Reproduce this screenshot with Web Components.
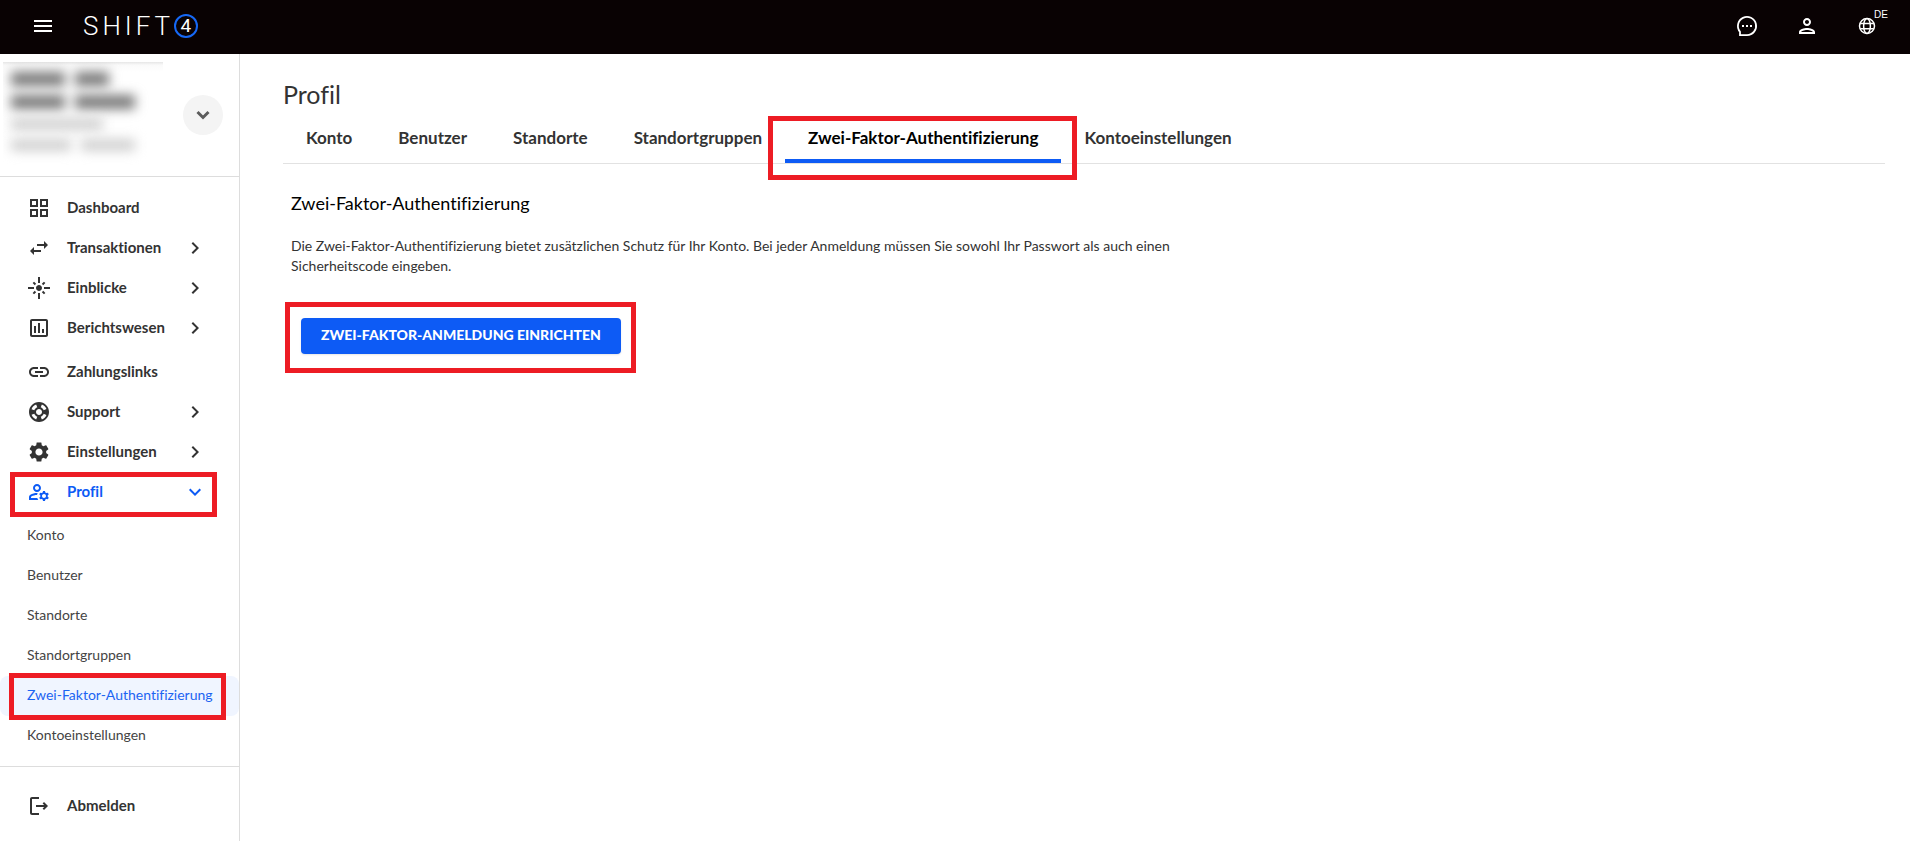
<!DOCTYPE html>
<html lang="de">
<head>
<meta charset="utf-8">
<meta name="viewport" content="width=device-width, initial-scale=1">
<title>Profil</title>
<style>
  body {
    margin: 0;
    background: #fff;
    color: #333;
    font-family: Lato, "Open Sans", sans-serif;
    font-size: 14px;
    font-variant-ligatures: none;
  }
</style>
</head>
<body>

<portal-app></portal-app>

<script>
/*
  ui-icon
  Atributos
  - name: nombre del icono en ICONS
  - size: lado en px (24 por defecto)
*/
const ICONS = {
  menu: '<path d="M3 18h18v-2H3v2zm0-5h18v-2H3v2zm0-7v2h18V6H3z"/>',
  chat: '<path d="M12 21.100H5v-3.300A9.100 9.100 0 1 1 12 21.100z" fill="none" stroke="currentColor" stroke-width="1.800"/><path d="M7 11h2v2H7zm4 0h2v2h-2zm4 0h2v2h-2z"/>',
  person: '<path d="M12 6c1.100 0 2 .9 2 2s-.9 2-2 2-2-.9-2-2 .9-2 2-2m0 10c2.700 0 5.800 1.290 6 2H6c.23-.72 3.310-2 6-2m0-12C9.790 4 8 5.790 8 8s1.790 4 4 4 4-1.790 4-4-1.790-4-4-4zm0 10c-2.670 0-8 1.340-8 4v2h16v-2c0-2.660-5.330-4-8-4z"/>',
  globe: '<g fill="none" stroke="currentColor" stroke-width="2"><circle cx="12" cy="12" r="10"/><ellipse cx="12" cy="12" rx="4.500" ry="10"/><path d="M3 8.500h18M3 15.500h18"/></g>',
  dashboard: '<path d="M3 3v8h8V3H3zm6 6H5V5h4v4zm-6 4v8h8v-8H3zm6 6H5v-4h4v4zm4-16v8h8V3h-8zm6 6h-4V5h4v4zm-6 4v8h8v-8h-8zm6 6h-4v-4h4v4z"/>',
  transfer: '<path d="M6.990 11L3 15l3.990 4v-3H14v-2H6.990v-3zM21 9l-3.990-4v3H10v2h7.010v3L21 9z"/>',
  flare: '<path d="M7 11H1v2h6v-2zm2.170-3.240L7.050 5.640 5.640 7.050l2.120 2.120 1.410-1.410zM13 1h-2v6h2V1zm5.360 6.050l-1.410-1.410-2.120 2.120 1.410 1.410 2.120-2.120zM17 11v2h6v-2h-6zm-5-2c-1.660 0-3 1.340-3 3s1.340 3 3 3 3-1.340 3-3-1.340-3-3-3zm2.830 7.240l2.120 2.120 1.410-1.410-2.120-2.120-1.410 1.410zm-9.190.71l1.410 1.410 2.120-2.120-1.410-1.410-2.120 2.120zM11 23h2v-6h-2v6z"/>',
  chart: '<path d="M19 3H5c-1.100 0-2 .9-2 2v14c0 1.100.9 2 2 2h14c1.100 0 2-.9 2-2V5c0-1.100-.9-2-2-2zm0 16H5V5h14v14zM7 10h2v7H7zm4-3h2v10h-2zm4 6h2v4h-2z"/>',
  link: '<path d="M3.900 12c0-1.710 1.390-3.100 3.100-3.100h4V7H7c-2.760 0-5 2.240-5 5s2.240 5 5 5h4v-1.900H7c-1.710 0-3.100-1.390-3.100-3.100zM8 13h8v-2H8v2zm9-6h-4v1.900h4c1.710 0 3.100 1.390 3.100 3.100s-1.390 3.100-3.100 3.100h-4V17h4c2.760 0 5-2.240 5-5s-2.240-5-5-5z"/>',
  support: '<path d="M12 2C6.480 2 2 6.480 2 12s4.480 10 10 10 10-4.480 10-10S17.520 2 12 2zm7.460 7.120l-2.780 1.150c-.51-1.360-1.580-2.440-2.950-2.940l1.150-2.780c2.100.8 3.770 2.470 4.580 4.570zM12 15c-1.660 0-3-1.340-3-3s1.340-3 3-3 3 1.340 3 3-1.340 3-3 3zM9.130 4.540l1.170 2.780c-1.380.5-2.470 1.590-2.980 2.970L4.540 9.130c.81-2.110 2.480-3.780 4.590-4.590zM4.540 14.870l2.780-1.150c.51 1.380 1.590 2.460 2.970 2.960l-1.170 2.780c-2.100-.81-3.770-2.480-4.580-4.590zm10.340 4.590l-1.150-2.780c1.370-.51 2.450-1.590 2.950-2.970l2.780 1.170c-.81 2.100-2.480 3.770-4.580 4.580z"/>',
  settings: '<path d="M19.140 12.940c.04-.3.060-.61.060-.94 0-.32-.02-.64-.07-.94l2.030-1.580c.18-.14.230-.41.120-.61l-1.920-3.320c-.12-.22-.37-.29-.59-.22l-2.390.96c-.5-.38-1.030-.7-1.620-.94l-.36-2.540c-.04-.24-.24-.41-.48-.41h-3.840c-.24 0-.43.17-.47.410l-.36 2.540c-.59.240-1.130.57-1.620.94l-2.390-.96c-.22-.08-.47 0-.59.220L2.740 8.870c-.12.210-.08.470.12.610l2.030 1.580c-.05.3-.09.630-.09.940s.02.640.07.940l-2.030 1.580c-.18.140-.23.410-.12.610l1.920 3.320c.12.220.37.290.59.220l2.390-.96c.5.380 1.030.7 1.620.94l.36 2.540c.05.240.24.410.48.410h3.840c.24 0 .44-.17.470-.41l.36-2.540c.59-.24 1.130-.56 1.620-.94l2.390.96c.22.080.47 0 .59-.22l1.920-3.320c.12-.22.070-.47-.12-.61l-2.010-1.580zM12 15.600c-1.980 0-3.600-1.620-3.600-3.600s1.620-3.600 3.600-3.600 3.600 1.620 3.600 3.600-1.620 3.600-3.600 3.600z"/>',
  profile: '<path d="M4 18v-.65c0-.34.160-.66.410-.81C6.100 15.530 8.030 15 10 15c.03 0 .05 0 .08.010.1-.7.300-1.370.590-1.980-.22-.02-.44-.03-.67-.03-2.420 0-4.680.67-6.610 1.820-.88.520-1.390 1.500-1.390 2.530V20h9.260c-.42-.6-.75-1.280-.97-2H4zM10 12c2.210 0 4-1.790 4-4s-1.790-4-4-4-4 1.790-4 4 1.790 4 4 4zm0-6c1.100 0 2 .9 2 2s-.9 2-2 2-2-.9-2-2 .9-2 2-2zM20.750 16c0-.22-.03-.42-.06-.63l1.140-1.010-1-1.730-1.450.49c-.32-.27-.68-.48-1.080-.63L18 11h-2l-.3 1.490c-.4.150-.76.360-1.080.63l-1.450-.49-1 1.730 1.140 1.010c-.03.210-.06.410-.06.630s.03.420.06.630l-1.140 1.010 1 1.730 1.450-.49c.32.270.68.480 1.080.63L16 21h2l.3-1.490c.4-.15.760-.36 1.080-.63l1.450.49 1-1.730-1.140-1.010c.03-.21.060-.41.060-.63zM17 18c-1.100 0-2-.9-2-2s.9-2 2-2 2 .9 2 2-.9 2-2 2z"/>',
  logout: '<path d="M12 3H5c-1.100 0-2 .9-2 2v14c0 1.100.9 2 2 2h7v-2H5V5h7zM17 8l-1.400 1.400L17.200 11H9v2h8.200l-1.600 1.600L17 16l4-4z"/>',
  right: '<path d="M10 6L8.590 7.410 13.170 12l-4.580 4.590L10 18l6-6z"/>',
  down: '<path d="M16.590 8.590L12 13.170 7.410 8.590 6 10l6 6 6-6z"/>',
  expand: '<path d="M6.500 9l5.500 5.500L17.500 9" fill="none" stroke="currentColor" stroke-width="3"/>'
};

class UiIcon extends HTMLElement {
  constructor() {
    super();
    this.attachShadow({ mode: "open" });
  }

  connectedCallback() {
    const size = this.getAttribute("size") || 24;
    this.shadowRoot.innerHTML = `
      <style>
        :host { display: inline-flex; flex: none; }
        svg { display: block; fill: currentColor; }
      </style>
      <svg width="${size}" height="${size}" viewBox="0 0 24 24" aria-hidden="true">${ICONS[this.getAttribute("name")]}</svg>
    `;
  }
}
customElements.define("ui-icon", UiIcon);


/*
  mark-box: marco rojo alrededor de lo que recibe en el slot

  Custom properties
  - --mark-inset: distancia del marco a cada lado del contenido
*/
class MarkBox extends HTMLElement {
  constructor() {
    super();
    this.attachShadow({ mode: "open" }).innerHTML = `
      <style>
        :host { display: block; position: relative; }
        .frame {
          position: absolute;
          inset: var(--mark-inset, 0);
          border: 5px solid #ed1c24;
          pointer-events: none;
          z-index: 1;
        }
      </style>
      <slot></slot>
      <div class="frame"></div>
    `;
  }
}
customElements.define("mark-box", MarkBox);


const topBarTemplate = document.createElement("template");
topBarTemplate.innerHTML = `
<style>
  :host {
    display: flex;
    align-items: center;
    justify-content: space-between;
    height: 54px;
    padding: 0 31px 2px;
    background: #090203;
    color: #fff;
    box-sizing: border-box;
  }
  .left, .right { display: flex; align-items: center; }
  .left { gap: 28px; }
  .right { gap: 36px; }
  button {
    display: flex;
    position: relative;
    padding: 0;
    border: 0;
    background: none;
    color: inherit;
    cursor: pointer;
  }
  .globe { width: 24px; height: 24px; align-items: center; justify-content: center; }
  .lang {
    position: absolute;
    left: 19px;
    top: -5px;
    font: 10px/12px "Liberation Sans", sans-serif;
  }
  .logo {
    display: flex;
    align-items: center;
    color: inherit;
    text-decoration: none;
    font: 300 26px/26px Roboto, sans-serif;
  }
  .word { display: flex; gap: 4px; }
  .four {
    width: 20px;
    height: 20px;
    margin-left: 4px;
    border: 2px solid #1668f5;
    border-radius: 50%;
    font-size: 19px;
    font-weight: 400;
    line-height: 20px;
    text-align: center;
  }
</style>
<div class="left">
  <button type="button" aria-label="Menü"><ui-icon name="menu"></ui-icon></button>
  <a class="logo" href="#">
    <span class="word"><span>S</span><span>H</span><span>I</span><span>F</span><span>T</span></span>
    <span class="four">4</span>
  </a>
</div>
<div class="right">
  <button type="button" aria-label="Chat"><ui-icon name="chat"></ui-icon></button>
  <button type="button" aria-label="Benutzerkonto"><ui-icon name="person"></ui-icon></button>
  <button type="button" class="globe" aria-label="Sprache"><ui-icon name="globe" size="18"></ui-icon><span class="lang">DE</span></button>
</div>
`;

class TopBar extends HTMLElement {
  constructor() {
    super();
    this.attachShadow({ mode: "open" }).appendChild(topBarTemplate.content.cloneNode(true));
  }
}
customElements.define("top-bar", TopBar);


/*
  nav-item
  Atributos
  - icon: icono de la izquierda
  - arrow: right | down
  - active
*/
class NavItem extends HTMLElement {
  constructor() {
    super();
    this.attachShadow({ mode: "open" });
  }

  connectedCallback() {
    const arrow = this.getAttribute("arrow");
    this.shadowRoot.innerHTML = `
      <style>
        :host { display: block; color: #333; }
        :host([active]) { color: #0d5bf5; }
        a {
          display: flex;
          align-items: center;
          height: 40px;
          padding: 0 32px 0 27px;
          color: inherit;
          font-size: 15px;
          font-weight: 700;
          text-decoration: none;
        }
        .label { flex: 1; margin: 0 16px; padding-bottom: 2px; }
      </style>
      <a href="#">
        <ui-icon name="${this.getAttribute("icon")}"></ui-icon>
        <span class="label"><slot></slot></span>
        ${arrow ? `<ui-icon name="${arrow}"></ui-icon>` : ""}
      </a>
    `;
  }
}
customElements.define("nav-item", NavItem);


class SubItem extends HTMLElement {
  constructor() {
    super();
    this.attachShadow({ mode: "open" }).innerHTML = `
      <style>
        :host { display: block; color: #444; }
        :host([active]) { color: #1c64f2; }
        :host([active]) a { background: #f0f5ff; }
        a {
          display: block;
          padding: 0 8px 2px 27px;
          border-radius: 8px;
          color: inherit;
          line-height: 38px;
          white-space: nowrap;
          text-decoration: none;
        }
      </style>
      <a href="#"><slot></slot></a>
    `;
  }
}
customElements.define("sub-item", SubItem);


// datos del comercio, ocultos con desenfoque
class AccountCard extends HTMLElement {
  constructor() {
    super();
    this.attachShadow({ mode: "open" }).innerHTML = `
      <style>
        :host {
          display: flex;
          align-items: center;
          justify-content: space-between;
          height: 122px;
          padding: 0 16px 0 3px;
          border-bottom: 1px solid #ddd;
        }
        .hidden {
          width: 160px;
          height: 106px;
          overflow: hidden;
          box-sizing: border-box;
          padding: 10px 8px;
          background: linear-gradient(#e6e6e6, #fafafa 3px, #fff 10px);
        }
        .line { display: flex; gap: 10px; height: 14px; margin-bottom: 9px; filter: blur(6px); }
        .line i { background: #777; }
        .line.light { height: 12px; }
        .line.light i { background: #d0d0d0; }
        button {
          display: flex;
          align-items: center;
          justify-content: center;
          width: 40px;
          height: 40px;
          padding: 0;
          border: 0;
          border-radius: 50%;
          background: #f4f4f4;
          color: #5c5c5c;
        }
      </style>
      <div class="hidden">
        <div class="line"><i style="width: 54px"></i><i style="width: 34px"></i></div>
        <div class="line"><i style="width: 54px"></i><i style="width: 60px"></i></div>
        <div class="line light"><i style="width: 92px"></i></div>
        <div class="line light"><i style="width: 60px"></i><i style="width: 54px"></i></div>
      </div>
      <button type="button" aria-label="Konto wechseln"><ui-icon name="expand"></ui-icon></button>
    `;
  }
}
customElements.define("account-card", AccountCard);


const sideBarTemplate = document.createElement("template");
sideBarTemplate.innerHTML = `
<style>
  :host {
    display: block;
    border-right: 1px solid #ddd;
  }
  .group { margin-bottom: 4px; }
  nav { padding: 11px 0 10px; border-bottom: 1px solid #ddd; }
  .bottom { padding: 19px 0 15px; }
  .mark-profile { --mark-inset: 0 22px -5px 10px; }
  .mark-sub { --mark-inset: -3px 13px -4px 9px; }
</style>
<account-card></account-card>
<nav>
  <div class="group">
    <nav-item icon="dashboard">Dashboard</nav-item>
    <nav-item icon="transfer" arrow="right">Transaktionen</nav-item>
    <nav-item icon="flare" arrow="right">Einblicke</nav-item>
    <nav-item icon="chart" arrow="right">Berichtswesen</nav-item>
  </div>
  <div class="group">
    <nav-item icon="link">Zahlungslinks</nav-item>
    <nav-item icon="support" arrow="right">Support</nav-item>
    <nav-item icon="settings" arrow="right">Einstellungen</nav-item>
    <mark-box class="mark-profile"><nav-item icon="profile" arrow="down" active>Profil</nav-item></mark-box>
  </div>
  <sub-item>Konto</sub-item>
  <sub-item>Benutzer</sub-item>
  <sub-item>Standorte</sub-item>
  <sub-item>Standortgruppen</sub-item>
  <mark-box class="mark-sub"><sub-item active>Zwei-Faktor-Authentifizierung</sub-item></mark-box>
  <sub-item>Kontoeinstellungen</sub-item>
</nav>
<div class="bottom">
  <nav-item icon="logout">Abmelden</nav-item>
</div>
`;

class SideBar extends HTMLElement {
  constructor() {
    super();
    this.attachShadow({ mode: "open" }).appendChild(sideBarTemplate.content.cloneNode(true));
  }
}
customElements.define("side-bar", SideBar);


class TabItem extends HTMLElement {
  constructor() {
    super();
    this.attachShadow({ mode: "open" }).innerHTML = `
      <style>
        :host { display: block; }
        a {
          display: block;
          height: 47px;
          padding: 0 23px;
          box-sizing: border-box;
          color: #333;
          font-size: 17px;
          font-weight: 700;
          line-height: 44px;
          white-space: nowrap;
          text-decoration: none;
        }
        :host([active]) a { color: #000; box-shadow: inset 0 -4px #0d5bf5; }
      </style>
      <a href="#"><slot></slot></a>
    `;
  }
}
customElements.define("tab-item", TabItem);


const profilePageTemplate = document.createElement("template");
profilePageTemplate.innerHTML = `
<style>
  :host { display: block; padding: 24px 25px 40px 43px; }
  h1 { margin: 0 0 6px; font-size: 25px; font-weight: 400; line-height: 32px; }
  .tabs { display: flex; border-bottom: 1px solid #e2e2e2; }
  .mark-tab { --mark-inset: 0 -16px -17px -17px; }
  section { padding: 27px 8px; }
  h2 { margin: 0 0 21px; color: #000; font-size: 18px; font-weight: 400; line-height: 24px; }
  p { max-width: 912px; margin: 0 0 42px; line-height: 20px; }
  .action { display: flex; padding-left: 10px; }
  .mark-action { --mark-inset: -16px -15px -19px -16px; }
  button {
    height: 36px;
    padding: 0 20px 3px;
    border: 0;
    border-radius: 4px;
    background: #0d5bf5;
    box-shadow: 0 1px 2px rgba(0, 0, 0, .1);
    color: #fff;
    font: inherit;
    font-weight: 900;
    text-transform: uppercase;
    cursor: pointer;
  }
</style>
<h1>Profil</h1>
<div class="tabs">
  <tab-item>Konto</tab-item>
  <tab-item>Benutzer</tab-item>
  <tab-item>Standorte</tab-item>
  <tab-item>Standortgruppen</tab-item>
  <mark-box class="mark-tab"><tab-item active>Zwei-Faktor-Authentifizierung</tab-item></mark-box>
  <tab-item>Kontoeinstellungen</tab-item>
</div>
<section>
  <h2>Zwei-Faktor-Authentifizierung</h2>
  <p>Die Zwei-Faktor-Authentifizierung bietet zusätzlichen Schutz für Ihr Konto. Bei jeder Anmeldung müssen Sie sowohl Ihr Passwort als auch einen Sicherheitscode eingeben.</p>
  <div class="action">
    <mark-box class="mark-action"><button type="button">Zwei-Faktor-Anmeldung einrichten</button></mark-box>
  </div>
</section>
`;

class ProfilePage extends HTMLElement {
  constructor() {
    super();
    this.attachShadow({ mode: "open" }).appendChild(profilePageTemplate.content.cloneNode(true));
  }
}
customElements.define("profile-page", ProfilePage);


class PortalApp extends HTMLElement {
  constructor() {
    super();
    this.attachShadow({ mode: "open" }).innerHTML = `
      <style>
        :host { display: flex; flex-direction: column; min-height: 100vh; }
        .body { display: grid; grid-template-columns: 240px 1fr; flex: 1; }
      </style>
      <top-bar></top-bar>
      <div class="body">
        <side-bar></side-bar>
        <profile-page></profile-page>
      </div>
    `;
  }
}
customElements.define("portal-app", PortalApp);
</script>
</body>
</html>
